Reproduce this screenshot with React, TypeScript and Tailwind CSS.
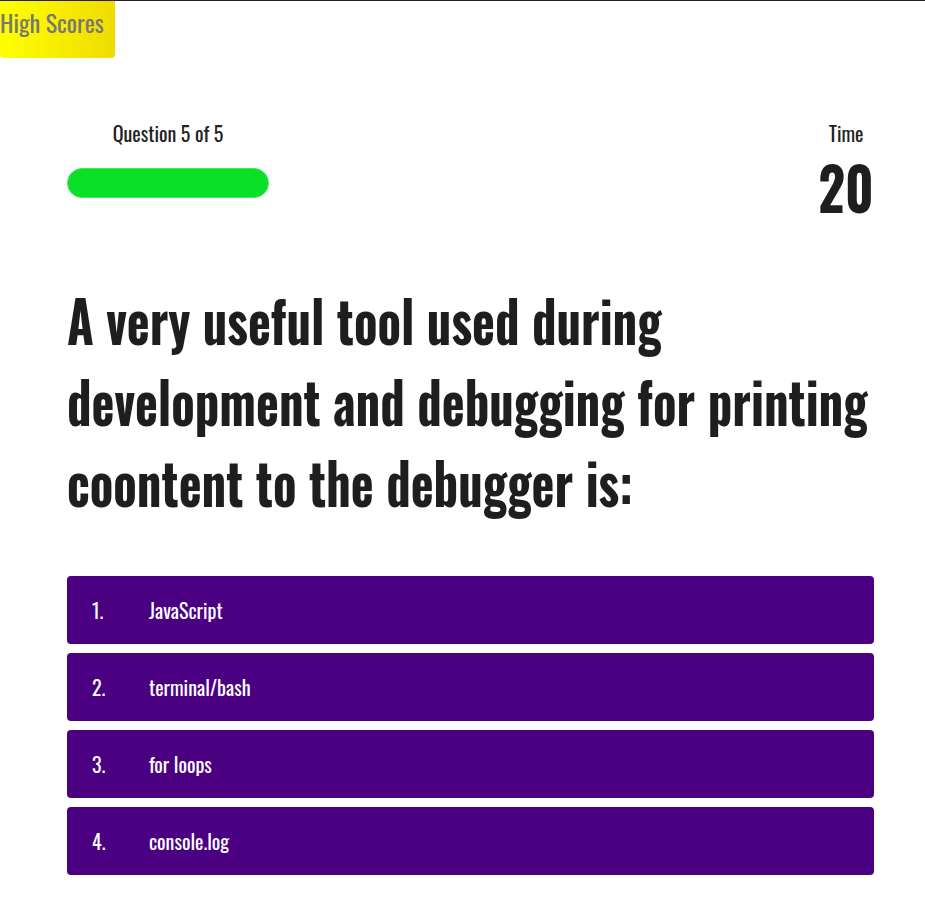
import React from "react";

const font = { fontFamily: "Oswald, 'Liberation Sans Narrow', 'DejaVu Sans Condensed', 'Roboto Condensed', sans-serif" };

export default function App() {
  const answers = ["JavaScript", "terminal/bash", "for loops", "console.log"];
  return (
    <div className="min-h-[909px] bg-white border-t border-[#222] overflow-hidden" style={font}>
      <button className="block w-[115px] h-[57px] pb-[15px] rounded-b-[4px] bg-gradient-to-r from-[#ffff00] to-[#f0dc00] text-[#777777] text-[24px] leading-[42px] text-left pl-0">
        High Scores
      </button>
      <div className="ml-[67px] w-[807px] pt-[61px]">
        <div className="flex justify-between">
          <div className="w-[202px] flex flex-col items-center">
            <div className="text-[20px] leading-[28px] text-[#222]">Question 5 of 5</div>
            <div className="mt-[21px] w-[202px] h-[30px] rounded-full bg-[#0ae026] border border-[#3ee85a]"></div>
          </div>
          <div className="flex flex-col items-center -mr-[4px]">
            <div className="text-[20px] leading-[28px] text-[#222]">Time</div>
            <div className="text-[60px] leading-[70px] font-bold text-[#1e1e1e] mt-[4px] origin-center scale-x-[0.87]">20</div>
          </div>
        </div>
        <h1 className="mt-[58px] w-[961px] origin-left scale-x-[0.84] text-[58px] leading-[81px] font-bold text-[#1e1e1e]">
          A very useful tool used during development and debugging for printing coontent to the debugger is:
        </h1>
        <div className="mt-[54px] flex flex-col gap-[9px]">
          {answers.map((a, i) => (
            <div key={a} className="h-[68px] rounded-[4px] bg-[#4b0082] text-white flex items-center text-[20px]">
              <span className="w-[82px] pl-[25px]">{i + 1}.</span>
              <span>{a}</span>
            </div>
          ))}
        </div>
      </div>
    </div>
  );
}
